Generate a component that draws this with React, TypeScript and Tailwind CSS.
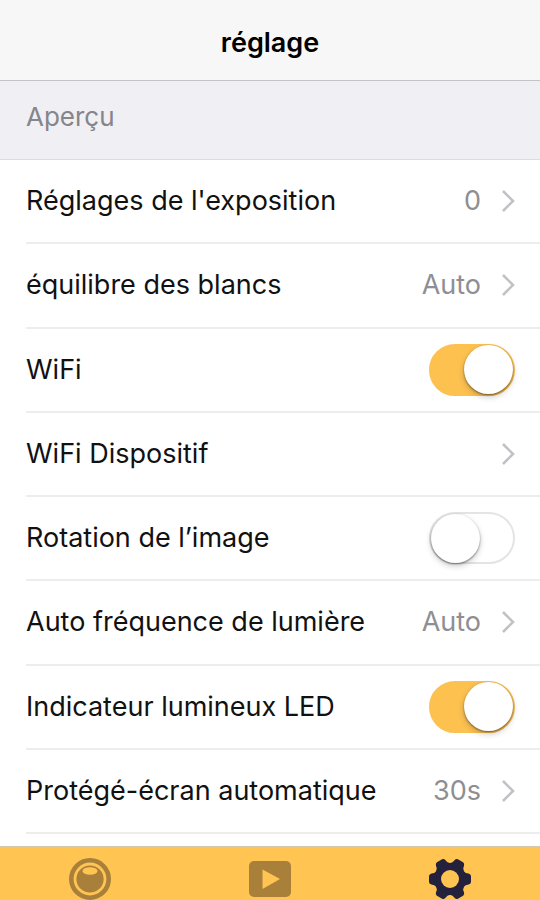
import React, { useState } from "react";

interface IRow {
  id: string;
  label: string;
  type: "link" | "switch";
  value?: string;
  on?: boolean;
}

const RowData: IRow[] = [
  { id: "exposure", label: "Réglages de l'exposition", type: "link", value: "0" },
  { id: "white", label: "équilibre des blancs", type: "link", value: "Auto" },
  { id: "wifi", label: "WiFi", type: "switch", on: true },
  { id: "device", label: "WiFi Dispositif", type: "link" },
  { id: "rotation", label: "Rotation de l’image", type: "switch", on: false },
  { id: "frequency", label: "Auto fréquence de lumière", type: "link", value: "Auto" },
  { id: "led", label: "Indicateur lumineux LED", type: "switch", on: true },
  { id: "saver", label: "Protégé-écran automatique", type: "link", value: "30s" },
];

const Chevron: React.FC = () => (
  <svg className="h-6 w-[14px] shrink-0" viewBox="0 0 14 24" fill="none" stroke="#c2c2c6" strokeWidth="2.6">
    <path d="M2 2 L12 12 L2 22" />
  </svg>
);

const CameraIcon: React.FC = () => (
  <svg className="h-[42px] w-[42px]" viewBox="-21 -21 42 42">
    <circle r="18.7" fill="none" stroke="#a8803a" strokeWidth="4.600" />
    <circle r="13.6" fill="#a8803a" />
    <ellipse cy="-8" rx="7.5" ry="3.8" fill="#ffc452" />
  </svg>
);

const PlayIcon: React.FC = () => (
  <svg className="h-[42px] w-[42px]" viewBox="-21 -21 42 42">
    <rect x="-21" y="-18" width="42" height="36" rx="5" fill="#a8803a" />
    <path d="M-7.500 -9.500 L10 0 L-7.500 10 Z" fill="#ffc452" />
  </svg>
);

const GearIcon: React.FC = () => (
  <svg className="h-[42px] w-[42px]" viewBox="-21 -21 42 42">
    <g fill="#23213b">
      <circle r="16" />
      {[0, 60, 120, 180, 240, 300].map((angle) => (
        <path
          key={angle}
          transform={`rotate(${angle})`}
          d="M13.500 -8 Q15.500 -5.500 18.500 -5.500 Q20.800 -5 21 -3 V3 Q20.800 5 18.500 5.500 Q15.500 5.500 13.500 8 Z"
        />
      ))}
    </g>
    <circle r="9" fill="#ffc452" />
  </svg>
);

const SwitchRow: React.FC<{ row: IRow }> = ({ row }) => {
  const [on, setOn] = useState(!!row.on);

  return (
    <div className="flex flex-1 items-center justify-between gap-4 pr-[25px]">
      <label htmlFor={row.id}>{row.label}</label>
      <input
        id={row.id}
        type="checkbox"
        role="switch"
        checked={on}
        onChange={() => setOn(!on)}
        className="flex h-[52px] w-[86px] shrink-0 cursor-pointer appearance-none items-center rounded-full border-2 border-[#e4e4e4] bg-white before:h-[49px] before:w-[49px] before:rounded-full before:bg-white before:shadow-[0_3px_6px_rgba(0,0,0,0.2),0_1px_2px_rgba(0,0,0,0.45)] checked:justify-end checked:border-[#fdc150] checked:bg-[#fdc150]"
      />
    </div>
  );
};

const LinkRow: React.FC<{ row: IRow }> = ({ row }) => (
  <button type="button" className="flex flex-1 cursor-pointer items-center justify-between gap-4 pr-[25px] text-left">
    <span>{row.label}</span>
    <span className="flex items-center gap-5 text-[#8e8e93]">
      {row.value}
      <Chevron />
    </span>
  </button>
);

const App: React.FC = () => {
  return (
    <div className="flex min-h-screen flex-col bg-white font-['Inter','Liberation_Sans',sans-serif] text-[27px] leading-8 text-[#111111]">
      <header className="border-b border-[#c4c4c6] bg-[#f7f7f7] pt-[27px] pb-[21px] text-center">
        <h1 className="font-semibold text-black">réglage</h1>
      </header>
      <main className="flex flex-1 flex-col">
        <h2 className="border-b border-[#dcdce0] bg-[#efeff4] pt-5 pb-[26px] pl-[26px] text-[26px] leading-8 text-[#85858a]">
          Aperçu
        </h2>
        <ul className="grid flex-1 auto-rows-fr pb-3 pl-[26px]">
          {RowData.map((row) => (
            <li key={row.id} className="flex border-b-2 border-[#ededee]">
              {row.type === "switch" ? <SwitchRow row={row} /> : <LinkRow row={row} />}
            </li>
          ))}
        </ul>
      </main>
      <nav className="grid grid-cols-3 border-t border-[#d3c7ac] bg-[#ffc452] pt-[11px]">
        <button type="button" aria-label="Caméra" className="flex cursor-pointer justify-center">
          <CameraIcon />
        </button>
        <button type="button" aria-label="Lecture" className="flex cursor-pointer justify-center">
          <PlayIcon />
        </button>
        <button type="button" aria-label="Réglage" className="flex cursor-pointer justify-center">
          <GearIcon />
        </button>
      </nav>
    </div>
  );
};

export default App;
